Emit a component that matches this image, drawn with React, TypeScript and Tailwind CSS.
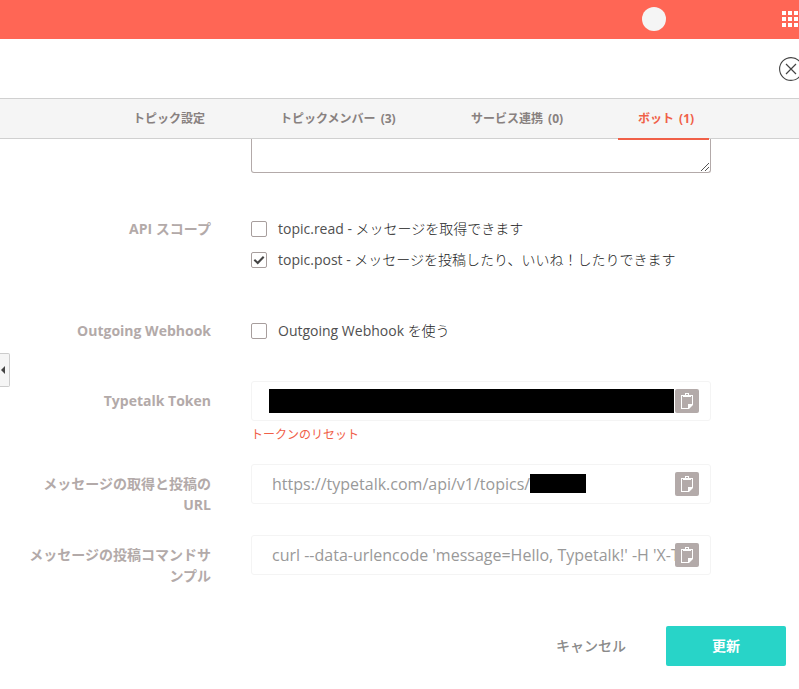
import type { ReactNode } from 'react';

function ClipboardIcon() {
  return (
    <svg width="24" height="24" viewBox="0 0 24 24" fill="none" shapeRendering="crispEdges">
      <path d="M6 6h12v9h-1V7H7v12h7v1H6z" fill="#fff" />
      <path d="M8 6h8v2H8z" fill="#fff" />
      <path d="M10 4h4v2h-1V5h-2v1h-1z" fill="#fff" />
      <path d="M13 15h5v1l-4 4h-1z" fill="#fff" shapeRendering="auto" />
    </svg>
  );
}

function CopyButton() {
  return (
    <button className="absolute right-[11px] top-[7px] size-6 rounded-[2px] bg-[#b3aaa9]" aria-label="copy">
      <ClipboardIcon />
    </button>
  );
}

function Label({ children }: { children: ReactNode }) {
  return (
    <div className="w-[211px] shrink-0 pl-5 text-right text-[14px] font-bold leading-[21px] text-[#b3aaa9]">
      {children}
    </div>
  );
}

function Checkbox({ checked = false, children }: { checked?: boolean; children: ReactNode }) {
  return (
    <label className="flex h-[21px] items-center text-[14px] leading-[21px] text-[#505050]">
      <span className="mr-[11px] flex size-4 items-center justify-center rounded-[2px] border border-[#a79e9d]">
        {checked && (
          <svg width="12" height="10" viewBox="0 0 12 10" fill="none">
            <path d="M1.3 4.7 4.7 8 10.7 1.7" stroke="#444" strokeWidth="2.1" />
          </svg>
        )}
      </span>
      <span className="whitespace-nowrap">{children}</span>
    </label>
  );
}

function Field({ children }: { children?: ReactNode }) {
  return (
    <div className="relative flex h-10 w-[460px] items-center rounded-[3px] border border-[#f4f4f4] pl-5 text-[16px] text-[#999]">
      {children}
      <CopyButton />
    </div>
  );
}

export default function App() {
  return (
    <div className="relative h-[689px] w-[799px] overflow-hidden bg-white font-['Open_Sans','Noto_Sans_CJK_JP',sans-serif]">
      <header className="flex h-[39px] items-center bg-[#ff6655] pb-px">
        <div className="ml-[642px] size-6 rounded-full bg-[#f5f5f5]" />
        <div className="ml-[116px] grid shrink-0 grid-cols-3 gap-[2px]">
          {Array.from({ length: 9 }, (_, i) => (
            <span key={i} className="size-1 bg-white" />
          ))}
        </div>
      </header>

      <div className="flex h-[59px] items-center pl-[779px]">
        <svg className="mt-px shrink-0" width="24" height="24" viewBox="0 0 24 24" fill="none" stroke="#444">
          <circle cx="12" cy="12" r="11.4" strokeWidth="1.1" />
          <path d="m7 7 10 10M17 7 7 17" strokeWidth="1.2" />
        </svg>
      </div>

      <nav className="flex h-[41px] border-y border-[#d0d0d0] bg-[#f5f5f5] pl-[113px] text-[12px] font-bold leading-[39px] text-[#888180] [word-spacing:2px]">
        <div className="w-[148px] pl-5">トピック設定</div>
        <div className="w-[190px] pl-[19px]">トピックメンバー (3)</div>
        <div className="w-[167px] pl-5">サービス連携 (0)</div>
        <div className="relative z-10 h-[41px] w-[91px] border-b-2 border-[#f06048] pl-5 text-[#f06048]">ボット (1)</div>
      </nav>

      <div className="ml-[251px] flex h-[34px] w-[460px] items-end justify-end rounded-b-[3px] border border-t-0 border-[#b3aaa9]">
        <svg className="mb-px mr-px" width="8" height="8" viewBox="0 0 8 8" fill="#555" shapeRendering="crispEdges">
          <path d="M7 0h1v1H7zM6 1h1v1H6zM5 2h1v1H5zM4 3h1v1H4zM3 4h1v1H3zM2 5h1v1H2zM1 6h1v1H1zM0 7h1v1H0zM7 4h1v1H7zM6 5h1v1H6zM5 6h1v1H5zM4 7h1v1H4z" />
        </svg>
      </div>

      <section className="mt-[45px] flex gap-10">
        <Label>API スコープ</Label>
        <div className="flex flex-col gap-[10px]">
          <Checkbox>topic.read - <span className="font-light text-[#222]">メッセージを取得できます</span></Checkbox>
          <Checkbox checked>topic.post - <span className="font-light text-[#222]">メッセージを投稿したり、いいね！したりできます</span></Checkbox>
        </div>
      </section>

      <section className="mt-[50px] flex gap-10">
        <Label>Outgoing Webhook</Label>
        <Checkbox>Outgoing Webhook <span className="font-light text-[#222]">を使う</span></Checkbox>
      </section>

      <section className="mt-[40px] flex gap-10">
        <div className="pt-[9px]">
          <Label>Typetalk Token</Label>
        </div>
        <div className="h-[83px]">
          <Field>
            <span className="-ml-[3px] h-6 w-[405px] bg-black" />
          </Field>
          <a className="block pt-[5px] text-[12px] leading-[18px] text-[#f06048]">トークンのリセット</a>
        </div>
      </section>

      <section className="flex h-[71px] gap-10">
        <div className="pt-[9px]">
          <Label>メッセージの取得と投稿のURL</Label>
        </div>
        <Field>
          <span className="w-[258px] shrink-0 whitespace-nowrap">https://typetalk.com/api/v1/topics/</span>
          <span className="mb-px h-[19px] w-14 bg-black" />
        </Field>
      </section>

      <section className="flex h-[91px] gap-10">
        <div className="pt-[9px]">
          <Label>メッセージの投稿コマンドサンプル</Label>
        </div>
        <Field>
          <span className="whitespace-nowrap">curl --data-urlencode 'message=Hello, Typetalk!' -H 'X-T</span>
        </Field>
      </section>

      <footer className="flex h-10 items-center justify-end gap-10 pr-[13px] text-[14px] font-bold">
        <button className="pb-[2px] font-medium text-[#8a8a8a]">キャンセル</button>
        <button className="h-10 w-[120px] rounded-[2px] bg-[#28d4c8] pb-[2px] text-white">更新</button>
      </footer>

      <div className="absolute left-0 top-[353px] flex h-[34px] w-[10px] items-center rounded-r-[2px] border border-l-0 border-[#ccc] bg-[#f5f5f5] pl-px">
        <svg width="4" height="8" viewBox="0 0 4 8">
          <path d="M4 0v8L0 4z" fill="#444" />
        </svg>
      </div>
    </div>
  );
}
